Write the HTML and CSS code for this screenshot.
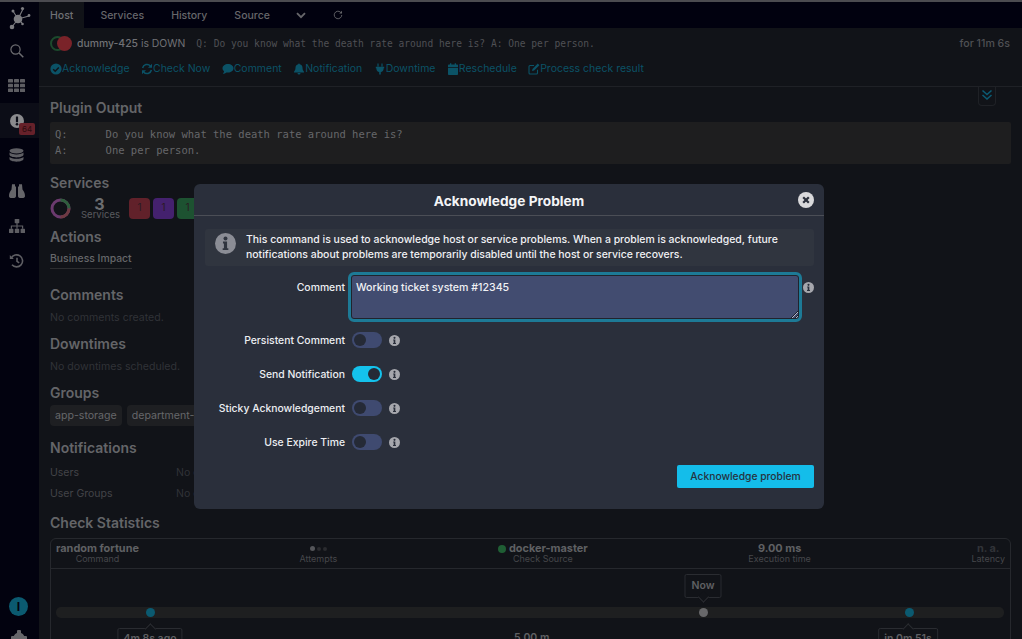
FILE: index.html
```html
<!DOCTYPE html>
<html lang="en">
<head>
  <meta charset="UTF-8" />
  <meta name="viewport" content="width=device-width, initial-scale=1.0"/>
  <title>dummy-425 - Acknowledge Problem</title>
  <link rel="stylesheet" href="styles.css">
</head>
<body>
<svg class="defs" width="0" height="0">
  <symbol id="i-info" viewBox="0 0 20 20">
    <circle cx="10" cy="10" r="10" fill="currentColor"/>
    <circle cx="10" cy="5.2" r="1.9" fill="var(--cut)"/>
    <path d="M7.6 8.2h3.9v6.4h1.2v1.7H7.3v-1.7h1.2V10H7.6z" fill="var(--cut)"/>
  </symbol>
  <symbol id="i-check" viewBox="0 0 12 12">
    <circle cx="6" cy="6" r="5.6" fill="currentColor"/>
    <path d="M3.2 6.2l2 2 3.6-3.8" fill="none" stroke="#111318" stroke-width="1.5"/>
  </symbol>
  <symbol id="i-refresh" viewBox="0 0 12 12">
    <path d="M1.6 5A4.5 4.5 0 0 1 9.4 3M10.4 7A4.5 4.5 0 0 1 2.6 9" fill="none" stroke="currentColor" stroke-width="1.5"/>
    <path d="M11 .8v4H7zM1 11.2v-4h4z" fill="currentColor"/>
  </symbol>
  <symbol id="i-comment" viewBox="0 0 12 12">
    <path d="M6 1c3 0 5.5 1.9 5.5 4.3S9 9.6 6 9.6c-.6 0-1.100-.1-1.600-.2C3.600 10.200 2.300 10.800.8 10.800c.7-.7 1.200-1.600 1.300-2.500C1 7.500.5 6.500.5 5.300.5 2.900 3 1 6 1z" fill="currentColor"/>
  </symbol>
  <symbol id="i-bell" viewBox="0 0 12 12">
    <path d="M6 .4c.5 0 .8.300.8.800 1.800.4 2.700 1.800 2.700 3.600 0 2.400.9 3.200 1.500 3.900v.8H1v-.8c.6-.7 1.500-1.500 1.500-3.900 0-1.800.9-3.200 2.700-3.600 0-.5.300-.8.800-.8zM4.500 10h3A1.500 1.500 0 0 1 4.500 10z" fill="currentColor"/>
  </symbol>
  <symbol id="i-plug" viewBox="0 0 12 12">
    <path d="M3.400.5h1.200v3H3.400zM7.400.5h1.200v3H7.400zM1.800 3.800h8.400v1.400h-.6v.6c0 1.800-1.200 3-2.800 3.300v2.400H5.200V9.100C3.600 8.800 2.400 7.600 2.400 5.800v-.6h-.6z" fill="currentColor"/>
  </symbol>
  <symbol id="i-calendar" viewBox="0 0 12 12">
    <path d="M3 .3h1.300v1.300h3.400V.3H9v1.300h1c.6 0 1 .4 1 1v1.500H1V2.600c0-.6.400-1 1-1h1zM1 4.800h10V11c0 .6-.4 1-1 1H2c-.6 0-1-.4-1-1z" fill="currentColor"/>
  </symbol>
  <symbol id="i-edit" viewBox="0 0 12 12">
    <path d="M9.500 6.800V10c0 .6-.4 1-1 1H2c-.6 0-1-.4-1-1V3.500c0-.6.400-1 1-1h4" fill="none" stroke="currentColor" stroke-width="1.100"/>
    <path d="M9.800.6l1.600 1.600-5.300 5.300-2.100.5.500-2.100z" fill="currentColor"/>
  </symbol>
</svg>

<nav class="sidebar">
  <svg class="logo" width="24" height="24" viewBox="0 0 24 24">
    <g stroke="#7c7c80" stroke-width="1.100"><path d="M11 13L6 5M11 13L16 3M11 13L22 10M11 13L5 21M11 13L15 17"/></g>
    <g fill="#7c7c80"><circle cx="11" cy="13" r="4.300"/><circle cx="15.500" cy="2.500" r="1.600"/><circle cx="6" cy="5" r="1.500"/><circle cx="22" cy="9.500" r="1.400"/><circle cx="5" cy="21" r="2.300"/><circle cx="15.500" cy="18" r="1.300"/></g>
  </svg>
  <a class="nav-item">
    <svg width="14" height="14" viewBox="0 0 14 14"><circle cx="5.500" cy="5.500" r="4.600" fill="none" stroke="#6d6d71" stroke-width="1.200"/><path d="M9 9l4.300 4.300" stroke="#6d6d71" stroke-width="1.500"/></svg>
  </a>
  <a class="nav-item">
    <svg width="17" height="13" viewBox="0 0 17 13" fill="#5e5e63"><rect width="5" height="3.600" rx=".6"/><rect x="6" width="5" height="3.600" rx=".6"/><rect x="12" width="5" height="3.600" rx=".6"/><rect y="4.700" width="5" height="3.600" rx=".6"/><rect x="6" y="4.700" width="5" height="3.600" rx=".6"/><rect x="12" y="4.700" width="5" height="3.600" rx=".6"/><rect y="9.400" width="5" height="3.600" rx=".6"/><rect x="6" y="9.400" width="5" height="3.600" rx=".6"/><rect x="12" y="9.400" width="5" height="3.600" rx=".6"/></svg>
  </a>
  <a class="nav-item active">
    <svg width="14" height="14" viewBox="0 0 14 14"><circle cx="7" cy="7" r="7" fill="#8a8a8d"/><rect x="5.900" y="2.600" width="2.200" height="5.600" rx=".5" fill="#0c0d17"/><circle cx="7" cy="10.300" r="1.300" fill="#0c0d17"/></svg>
    <span class="nav-badge">64</span>
  </a>
  <a class="nav-item">
    <svg width="15" height="16" viewBox="0 0 15 16" fill="#5e5e63"><ellipse cx="7.500" cy="2.800" rx="7" ry="2.600"/><path d="M.5 4.600c1.200 1.200 3.800 1.800 7 1.800s5.800-.6 7-1.800v2.200c0 1.400-3.100 2.600-7 2.600s-7-1.200-7-2.600zM.5 8.900c1.200 1.200 3.800 1.800 7 1.800s5.800-.6 7-1.800v2.200c0 1.400-3.100 2.600-7 2.600s-7-1.200-7-2.600z"/></svg>
  </a>
  <a class="nav-item">
    <svg width="16" height="16" viewBox="0 0 16 14.400" fill="#66666a"><path d="M3 .5h3v2.300h1v9.500c0 1.200-.6 1.800-1.800 1.800H1.800C.6 14.100 0 13.500 0 12.300c0-3 1-4.500 2.500-6.500zM13 .5h-3v2.300H9v9.500c0 1.200.6 1.800 1.800 1.800h3.400c1.200 0 1.800-.6 1.800-1.800 0-3-1-4.500-2.500-6.500z"/></svg>
  </a>
  <a class="nav-item">
    <svg width="16" height="14" viewBox="0 0 16 14" fill="#5e5e63"><rect x="5.700" width="4.600" height="4.200" rx=".6"/><rect y="9.800" width="4.400" height="4.200" rx=".6"/><rect x="5.800" y="9.800" width="4.400" height="4.200" rx=".6"/><rect x="11.600" y="9.800" width="4.400" height="4.200" rx=".6"/><path d="M7.400 4h1.200v2.400h5.600v3.400H13V7.600H8.600v2.200H7.400V7.600H3v2.200H1.800V6.400h5.600z"/></svg>
  </a>
  <a class="nav-item">
    <svg width="15" height="14" viewBox="0 0 15 14" fill="none" stroke="#5e5e63" stroke-width="1.600"><path d="M2.200 4.200A6 6 0 1 1 3 10.800"/><path d="M8 3.800v3.500l2.200 1.500"/><path d="M.8 1v4h4z" fill="#5e5e63" stroke="none"/></svg>
  </a>
  <div class="sidebar-bottom">
    <span class="user-dot">I</span>
    <svg class="cog" width="16" height="16" viewBox="0 0 16 16"><circle cx="8" cy="8" r="5.500" fill="#66666a"/><rect x="6" width="4" height="16" rx="1" fill="#66666a"/><rect y="6" width="16" height="4" rx="1" fill="#66666a"/></svg>
  </div>
</nav>

<div class="page">
  <header class="topbar">
    <a class="tab active">Host</a>
    <a class="tab">Services</a>
    <a class="tab">History</a>
    <a class="tab">Source</a>
    <svg class="tab-chevron" width="10" height="7" viewBox="0 0 10 7"><path d="M1 1.200l4 4 4-4" fill="none" stroke="#66666a" stroke-width="1.900"/></svg>
    <svg class="tab-refresh" width="10" height="10" viewBox="0 0 12 12"><path d="M10.500 6A4.500 4.500 0 1 1 9 2.600" fill="none" stroke="#66666a" stroke-width="1.100"/><path d="M10.800 .8v3.400H7.400z" fill="#66666a"/></svg>
  </header>

  <section class="host-head">
    <div class="host-line">
      <span class="state"><span class="state-ring"></span><span class="state-dot"></span></span>
      <span class="host-name">dummy-425</span>
      <span class="host-state">&nbsp;is DOWN</span>
      <span class="host-msg">Q: Do you know what the death rate around here is? A: One per person.</span>
      <span class="host-since">for 11m 6s</span>
    </div>
    <div class="host-actions">
      <a><svg width="12" height="12"><use href="#i-check"/></svg>Acknowledge</a>
      <a><svg width="12" height="12"><use href="#i-refresh"/></svg>Check Now</a>
      <a><svg width="12" height="12"><use href="#i-comment"/></svg>Comment</a>
      <a><svg width="12" height="12"><use href="#i-bell"/></svg>Notification</a>
      <a><svg width="12" height="12"><use href="#i-plug"/></svg>Downtime</a>
      <a><svg width="12" height="12"><use href="#i-calendar"/></svg>Reschedule</a>
      <a><svg width="12" height="12"><use href="#i-edit"/></svg>Process check result</a>
    </div>
    <span class="expand-tab">
      <svg width="12" height="12" viewBox="0 0 12 12"><path d="M1.500 1.500L6 5.500l4.500-4M1.500 6L6 10l4.500-4" fill="none" stroke="#0c5a72" stroke-width="1.600"/></svg>
    </span>
  </section>

  <main class="content">
    <h2>Plugin Output</h2>
    <pre class="output">Q:      Do you know what the death rate around here is?
A:      One per person.</pre>

    <h2 class="gap-10">Services</h2>
    <div class="services">
      <svg class="donut" width="21" height="21" viewBox="0 0 21 21" fill="none" stroke-width="3">
        <circle cx="10.500" cy="10.500" r="8.500" stroke="#6b3a6e"/>
        <path d="M10.500 2A8.500 8.500 0 0 1 19 10.500" stroke="#2f5f3d"/>
        <path d="M19 10.500A8.500 8.500 0 0 1 10.500 19" stroke="#6e3a42"/>
      </svg>
      <div class="svc-total"><strong>3</strong><span>Services</span></div>
      <span class="svc-count red">1</span>
      <span class="svc-count purple">1</span>
      <span class="svc-count green">1</span>
    </div>

    <h2 class="gap-9">Actions</h2>
    <a class="action-link">Business Impact</a>

    <h2 class="gap-17">Comments</h2>
    <p class="empty">No comments created.</p>

    <h2 class="gap-10">Downtimes</h2>
    <p class="empty">No downtimes scheduled.</p>

    <h2 class="gap-10">Groups</h2>
    <div class="tags">
      <span class="tag">app-storage</span>
      <span class="tag">department-it</span>
    </div>

    <h2 class="gap-13">Notifications</h2>
    <dl class="notify">
      <dt>Users</dt><dd>No contacts</dd>
      <dt>User Groups</dt><dd>No contact groups</dd>
    </dl>

    <h2 class="gap-13">Check Statistics</h2>
    <div class="stats">
      <div class="stats-head">
        <div class="stat"><b>random fortune</b><span>Command</span></div>
        <div class="stat"><b class="attempts"><i class="on"></i><i></i><i></i></b><span>Attempts</span></div>
        <div class="stat"><b><i class="ok"></i>docker-master</b><span>Check Source</span></div>
        <div class="stat"><b>9.00 ms</b><span>Execution time</span></div>
        <div class="stat"><b class="na">n. a.</b><span>Latency</span></div>
      </div>
      <div class="timeline">
        <div class="track"></div>
        <span class="mark" style="left: 99px"></span>
        <span class="mark now" style="left: 652px"></span>
        <span class="mark" style="left: 858px"></span>
        <span class="tip up" style="left: 652px">Now</span>
        <span class="tip" style="left: 99px">4m 8s ago</span>
        <span class="tip" style="left: 857px">in 0m 51s</span>
        <span class="interval">5.00 m</span>
      </div>
    </div>
  </main>
</div>

<div class="modal">
  <div class="modal-head">
    <h3>Acknowledge Problem</h3>
    <svg class="modal-close" width="16" height="16" viewBox="0 0 16 16"><circle cx="8" cy="8" r="8" fill="#d9d9db"/><path d="M5.200 5.200l5.600 5.600M10.800 5.200l-5.600 5.600" stroke="#2a2f3b" stroke-width="2.200"/></svg>
  </div>
  <div class="modal-body">
    <div class="notice">
      <svg class="notice-icon" width="21" height="21"><use href="#i-info"/></svg>
      <p>This command is used to acknowledge host or service problems. When a problem is acknowledged, future notifications about problems are temporarily disabled until the host or service recovers.</p>
    </div>
    <div class="form">
      <div class="row row-text">
        <label>Comment</label>
        <textarea>Working ticket system #12345</textarea>
        <svg class="hint" width="11" height="11"><use href="#i-info"/></svg>
      </div>
      <div class="row">
        <label>Persistent Comment</label>
        <span class="toggle"></span>
        <svg class="hint" width="11" height="11"><use href="#i-info"/></svg>
      </div>
      <div class="row">
        <label>Send Notification</label>
        <span class="toggle on"></span>
        <svg class="hint" width="11" height="11"><use href="#i-info"/></svg>
      </div>
      <div class="row">
        <label>Sticky Acknowledgement</label>
        <span class="toggle"></span>
        <svg class="hint" width="11" height="11"><use href="#i-info"/></svg>
      </div>
      <div class="row">
        <label>Use Expire Time</label>
        <span class="toggle"></span>
        <svg class="hint" width="11" height="11"><use href="#i-info"/></svg>
      </div>
    </div>
    <div class="modal-foot">
      <button type="button">Acknowledge problem</button>
    </div>
  </div>
</div>
</body>
</html>
```

FILE: styles.css
```css
html, body {
  margin: 0;
  height: 639px;
  overflow: hidden;
}
body {
  display: flex;
  background: #111318;
  border-top: 2px solid #4b4b50;
  box-sizing: border-box;
  font-family: Inter, 'Liberation Sans', sans-serif;
  font-size: 10.5px;
  color: #5a5b5f;
  position: relative;
}
.defs { position: absolute; }

.sidebar {
  width: 39px;
  flex: none;
  background: #02020f;
  display: flex;
  flex-direction: column;
  align-items: center;
  padding-top: 4px;
  box-sizing: border-box;
}
.logo { margin-left: -2px; margin-bottom: 3px; }
.nav-item {
  width: 100%;
  height: 35px;
  display: flex;
  align-items: center;
  justify-content: center;
  position: relative;
  margin-left: -6px;
  padding-left: 0;
}
.nav-item.active { background: #0c0d17; margin-left: 0; padding-right: 6px; box-sizing: border-box; }
.nav-badge {
  position: absolute;
  left: 19px;
  top: 20px;
  width: 16px;
  height: 12px;
  border-radius: 2px;
  background: #66212a;
  color: #2c0c10;
  font-size: 8px;
  line-height: 12px;
  text-align: center;
}
.sidebar-bottom {
  margin-top: auto;
  margin-left: -2px;
  display: flex;
  flex-direction: column;
  align-items: center;
  gap: 14px;
  height: 42px;
}
.user-dot {
  width: 19px;
  height: 19px;
  flex: none;
  border-radius: 50%;
  background: #0b5a70;
  color: #02020f;
  font-size: 12px;
  font-weight: 700;
  line-height: 19px;
  text-align: center;
}
.cog { flex: none; }

.page {
  flex: 1;
  min-width: 0;
  display: flex;
  flex-direction: column;
}

.topbar {
  height: 26px;
  flex: none;
  background: #01010f;
  display: flex;
  align-items: center;
}
.tab {
  height: 100%;
  display: flex;
  align-items: center;
  font-weight: 500;
  font-size: 10.5px;
  color: #66666a;
  margin-right: 27px;
}
.tab.active {
  background: #111318;
  color: #6f7074;
  padding: 0 11px;
  margin-right: 16px;
}
.tab:nth-child(4) { margin-right: 26px; }
.tab-chevron { margin-right: 27px; }

.host-head {
  height: 58px;
  flex: none;
  border-bottom: 1px solid #1f2126;
  padding: 0 11px;
  position: relative;
}
.host-line {
  display: flex;
  align-items: center;
  height: 30px;
}
.state {
  width: 23px;
  height: 15px;
  position: relative;
  margin-right: 4px;
}
.state-ring {
  position: absolute;
  left: 0;
  top: 0;
  width: 11px;
  height: 11px;
  border: 2px solid #1c4a2c;
  border-radius: 50%;
}
.state-dot {
  position: absolute;
  left: 7px;
  top: 0;
  width: 15px;
  height: 15px;
  border-radius: 50%;
  background: #7a2329;
}
.host-name, .host-state { font-size: 10.4px; font-weight: 500; color: #707175; }
.host-state { font-weight: 400; }
.host-msg {
  font-family: 'DejaVu Sans Mono', 'Liberation Mono', monospace;
  font-size: 9.6px;
  margin-left: 11px;
  color: #4f5054;
}
.host-since { margin-left: auto; margin-right: 1px; font-weight: 500; font-size: 10.6px; color: #4f5054; }
.host-actions {
  display: flex;
  gap: 11.4px;
  margin-top: 4px;
  font-size: 10.5px;
  color: #0b5266;
}
.host-actions a { display: flex; align-items: center; }
.host-actions svg { flex: none; }
.expand-tab {
  position: absolute;
  right: 26px;
  top: 58px;
  width: 18px;
  height: 20px;
  border: 1px solid #1f2126;
  border-top: 0;
  border-radius: 0 0 4px 4px;
  display: flex;
  justify-content: center;
  padding-top: 3px;
  box-sizing: border-box;
}

.content { padding: 12px 11px 0; }
h2 {
  font-size: 14px;
  line-height: 18px;
  font-weight: 600;
  margin: 11px 0 0;
  color: #646568;
}
.content > h2:first-child { margin-top: 0; }
h2.gap-9 { margin-top: 9px; }
h2.gap-10 { margin-top: 10px; }
h2.gap-13 { margin-top: 13px; }
h2.gap-17 { margin-top: 17px; }

.output {
  margin: 5px 0 0;
  height: 42px;
  padding: 4px 5px 0;
  box-sizing: border-box;
  background: #1e1e1f;
  border-radius: 2px;
  font-family: 'DejaVu Sans Mono', 'Liberation Mono', monospace;
  font-size: 10.5px;
  line-height: 16px;
  color: #66676a;
}

.services {
  display: flex;
  align-items: center;
  height: 21px;
  margin-top: 6px;
}
.donut { margin-right: 10px; flex: none; }
.svc-total {
  width: 37px;
  margin-right: 11px;
  text-align: center;
  display: flex;
  flex-direction: column;
}
.svc-total strong { font-size: 16px; font-weight: 700; line-height: 12px; color: #6c6d70; }
.svc-total span { font-size: 9.5px; line-height: 10px; }
.svc-count {
  width: 21px;
  height: 21px;
  border-radius: 4px;
  margin-right: 3px;
  text-align: center;
  line-height: 19px;
  font-size: 10px;
  color: #2a1a22;
}
.svc-count.red { background: #61212a; }
.svc-count.purple { background: #44216e; }
.svc-count.green { background: #1d5231; }

.action-link {
  display: inline-block;
  margin-top: 6px;
  padding-bottom: 2px;
  line-height: 14px;
  font-size: 10.4px;
  font-weight: 500;
  color: #66676a;
  border-bottom: 1px solid #2c2d30;
}

.empty {
  margin: 7px 0 0;
  line-height: 14px;
  font-size: 10.6px;
  color: #303237;
}

.tags { display: flex; gap: 5px; margin-top: 3px; }
.tag {
  height: 21px;
  padding: 0 5px;
  border-radius: 4px;
  background: #1e1f22;
  font-size: 10.6px;
  line-height: 21px;
  color: #66676a;
}

.notify {
  display: grid;
  grid-template-columns: 126px 1fr;
  row-gap: 7px;
  margin: 9px 0 0;
  line-height: 14px;
}
.notify dt { color: #434448; }
.notify dd { margin: 0; color: #303237; }

.stats {
  margin-top: 6px;
  height: 200px;
  border: 1px solid #26282d;
  border-radius: 6px;
}
.stats-head {
  height: 29px;
  border-bottom: 1px solid #26282d;
  display: flex;
  justify-content: space-between;
  padding: 0 5px;
}
.stat {
  display: flex;
  flex-direction: column;
  align-items: center;
  padding-top: 4px;
}
.stat b {
  font-size: 10.9px;
  line-height: 11px;
  font-weight: 700;
  color: #5f6063;
  display: flex;
  align-items: center;
  gap: 3px;
  height: 11px;
}
.stat span { font-size: 9px; line-height: 10px; color: #46474b; }
.stat b.na { color: #313338; }
.stat i {
  display: block;
  width: 8px;
  height: 8px;
  border-radius: 50%;
}
.stat i.ok { background: #1f5e34; }
.stat b.attempts { gap: 2px; }
.attempts i { width: 4px; height: 4px; background: #2a2b2f; }
.attempts i.on { width: 5px; height: 5px; background: #55565a; }

.timeline { position: relative; height: 170px; }
.track {
  position: absolute;
  left: 5px;
  right: 6px;
  top: 38px;
  height: 11px;
  border-radius: 5px;
  background: #1e1f20;
}
.mark {
  position: absolute;
  top: 39px;
  width: 9px;
  height: 9px;
  margin-left: -4.5px;
  border-radius: 50%;
  background: #0b5a70;
}
.mark.now { background: #68686a; }
.tip {
  position: absolute;
  top: 59px;
  transform: translateX(-50%);
  padding: 0 5px;
  height: 20px;
  line-height: 19px;
  white-space: nowrap;
  font-size: 10.5px;
  font-weight: 600;
  color: #5f6063;
  background: #111318;
  border: 1px solid #2a2c31;
  border-radius: 2px;
}
.tip::before {
  content: "";
  position: absolute;
  left: 50%;
  top: -4px;
  width: 7px;
  height: 7px;
  margin-left: -4px;
  background: #111318;
  border-left: 1px solid #2a2c31;
  border-top: 1px solid #2a2c31;
  transform: rotate(45deg);
}
.tip.up { top: 5px; height: 22px; line-height: 21px; padding: 0 6px; }
.tip.up::before {
  top: auto;
  bottom: -4px;
  border: 0;
  border-right: 1px solid #2a2c31;
  border-bottom: 1px solid #2a2c31;
}
.interval {
  position: absolute;
  left: 463px;
  top: 62px;
  font-size: 10.5px;
  font-weight: 600;
  color: #5f6063;
}

.modal {
  position: absolute;
  left: 194px;
  top: 182px;
  width: 630px;
  height: 325px;
  background: #2a2f3b;
  border-radius: 6px;
  color: #eceef2;
  --cut: #2a2f3b;
}
.modal-head {
  height: 31px;
  border-bottom: 1px solid #4b4e56;
  display: flex;
  align-items: center;
  justify-content: center;
  position: relative;
}
.modal-head h3 {
  margin: 2px 0 0;
  font-size: 13.7px;
  font-weight: 700;
  color: #f4f5f7;
}
.modal-close {
  position: absolute;
  right: 10px;
  top: 8px;
}
.modal-body { padding: 13px 10px 0 11px; }
.notice {
  height: 37px;
  display: flex;
  align-items: center;
  background: #30353f;
  border-radius: 3px;
  box-sizing: border-box;
  padding: 0 10px;
}
.notice-icon { flex: none; color: #8b8d95; margin-right: 10px; margin-top: -9px; --cut: #30353f; }
.notice p {
  margin: 0;
  padding-bottom: 2px;
  font-size: 10.46px;
  line-height: 15px;
  font-weight: 500;
  color: #f0f1f4;
}

.form { display: flex; flex-direction: column; gap: 18px; margin-top: 6px; }
.row {
  display: flex;
  align-items: center;
  height: 16px;
}
.row label {
  width: 140px;
  margin-right: 7px;
  flex: none;
  text-align: right;
  font-size: 10.4px;
  font-weight: 500;
}
.row-text { height: 50px; align-items: flex-start; margin-bottom: -8px; }
.row-text label { margin-top: 9px; margin-right: 3px; }
.row-text .hint { margin-top: 10px; margin-left: 1px; }
textarea {
  width: 454px;
  height: 50px;
  flex: none;
  box-sizing: border-box;
  margin: 0;
  padding: 6px 5px 4px;
  font-family: inherit;
  font-size: 10.6px;
  line-height: 13px;
  font-weight: 500;
  color: #f0f1f4;
  background: #424c70;
  border: 3px solid #1d7a96;
  border-radius: 6px;
  outline: 0;
  box-shadow: inset 0 0 0 1px #20242d;
}
.hint { flex: none; color: #a6a7ad; margin-left: 7px; }

.toggle {
  width: 30px;
  height: 16px;
  flex: none;
  border-radius: 8px;
  background: #3f4a70;
  position: relative;
}
.toggle::after {
  content: "";
  position: absolute;
  left: 2px;
  top: 2px;
  width: 12px;
  height: 12px;
  border-radius: 50%;
  background: #252a36;
}
.toggle.on { background: #14c2ec; }
.toggle.on::after { left: 16px; }

.modal-foot { display: flex; justify-content: flex-end; margin-top: 15px; }
button {
  width: 137px;
  height: 23px;
  border: 0;
  border-radius: 2px;
  padding: 0 0 2px;
  background: #14bdea;
  color: #26323f;
  font-family: inherit;
  font-size: 10.3px;
  font-weight: 500;
  cursor: pointer;
}
```
